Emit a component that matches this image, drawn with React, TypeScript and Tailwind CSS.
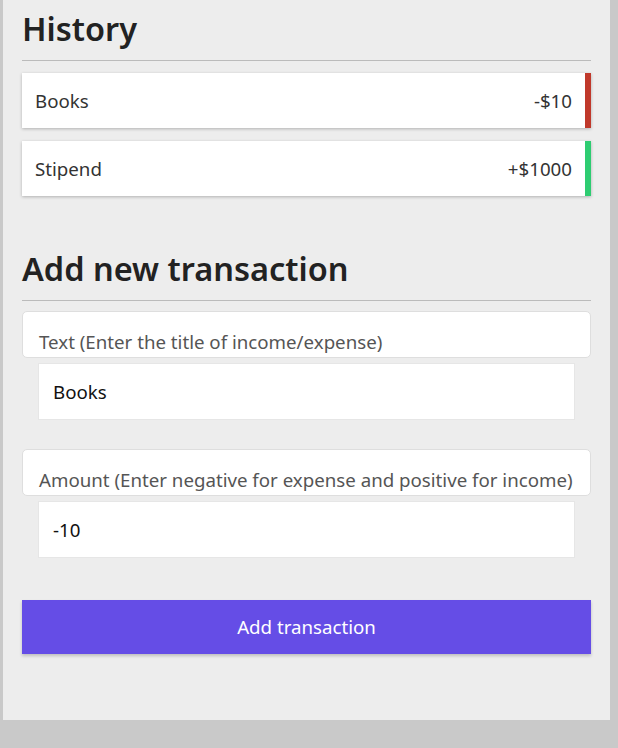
import { useState } from 'react'

type Tx = { id: number; text: string; amount: number }

export default function App() {
  const [transactions] = useState<Tx[]>([
    { id: 1, text: 'Books', amount: -10 },
    { id: 2, text: 'Stipend', amount: 1000 },
  ])
  const [text, setText] = useState('Books')
  const [amount, setAmount] = useState('-10')

  return (
    <div className="min-h-[748px] bg-[#c9c9c9] pl-[3px] pr-[8px] font-['Noto_Sans',sans-serif]">
      <div className="h-[720px] bg-[#ededed] px-[19px] pt-[6px] text-[#333]">
        {/* History */}
        <h3 className="border-b border-[#bbb] pb-[9px] text-[32.5px] font-semibold leading-[45px] text-[#222]">
          History
        </h3>
        <ul className="mt-[12px] flex flex-col gap-[13px]">
          {transactions.map((t) => (
            <li
              key={t.id}
              className={
                'flex h-[55px] items-center justify-between border-r-[6px] bg-white pl-[13px] pr-[13px] pt-[2px] text-[18.7px] text-[#333] shadow-[0_1px_3px_rgba(0,0,0,0.25)] ' +
                (t.amount < 0 ? 'border-[#c0392b]' : 'border-[#2ecc71]')
              }
            >
              <span>{t.text}</span>
              <span>
                {t.amount < 0 ? '-' : '+'}${Math.abs(t.amount)}
              </span>
            </li>
          ))}
        </ul>

        {/* Add new transaction */}
        <h3 className="mt-[50px] border-b border-[#bbb] pb-[9px] text-[32.5px] font-semibold leading-[45px] text-[#222]">
          Add new transaction
        </h3>
        <form className="mt-[10px]" onSubmit={(e) => e.preventDefault()}>
          <div>
            <label className="block h-[47px] rounded-[5px] border border-[#dedede] bg-white pl-[16px] pt-[18px] text-[18.7px] leading-[24px] text-[#555]">
              Text (Enter the title of income/expense)
            </label>
            <input
              value={text}
              onChange={(e) => setText(e.target.value)}
              className="mx-[16px] mt-[5px] block h-[57px] w-[537px] border border-[#e6e6e6] bg-white px-[14px] text-[18.7px] text-[#111] outline-none"
            />
          </div>
          <div className="mt-[29px]">
            <label className="block h-[47px] rounded-[5px] border border-[#dedede] bg-white pl-[16px] pt-[18px] text-[18.7px] leading-[24px] text-[#555]">
              Amount (Enter negative for expense and positive for income)
            </label>
            <input
              value={amount}
              onChange={(e) => setAmount(e.target.value)}
              className="mx-[16px] mt-[5px] block h-[57px] w-[537px] border border-[#e6e6e6] bg-white px-[14px] text-[18.7px] text-[#111] outline-none"
            />
          </div>
          <button className="mt-[42px] block h-[54px] w-full bg-[#654de6] text-[18.7px] text-white shadow-[0_2px_3px_rgba(0,0,0,0.2)]">
            Add transaction
          </button>
        </form>
      </div>
    </div>
  )
}
